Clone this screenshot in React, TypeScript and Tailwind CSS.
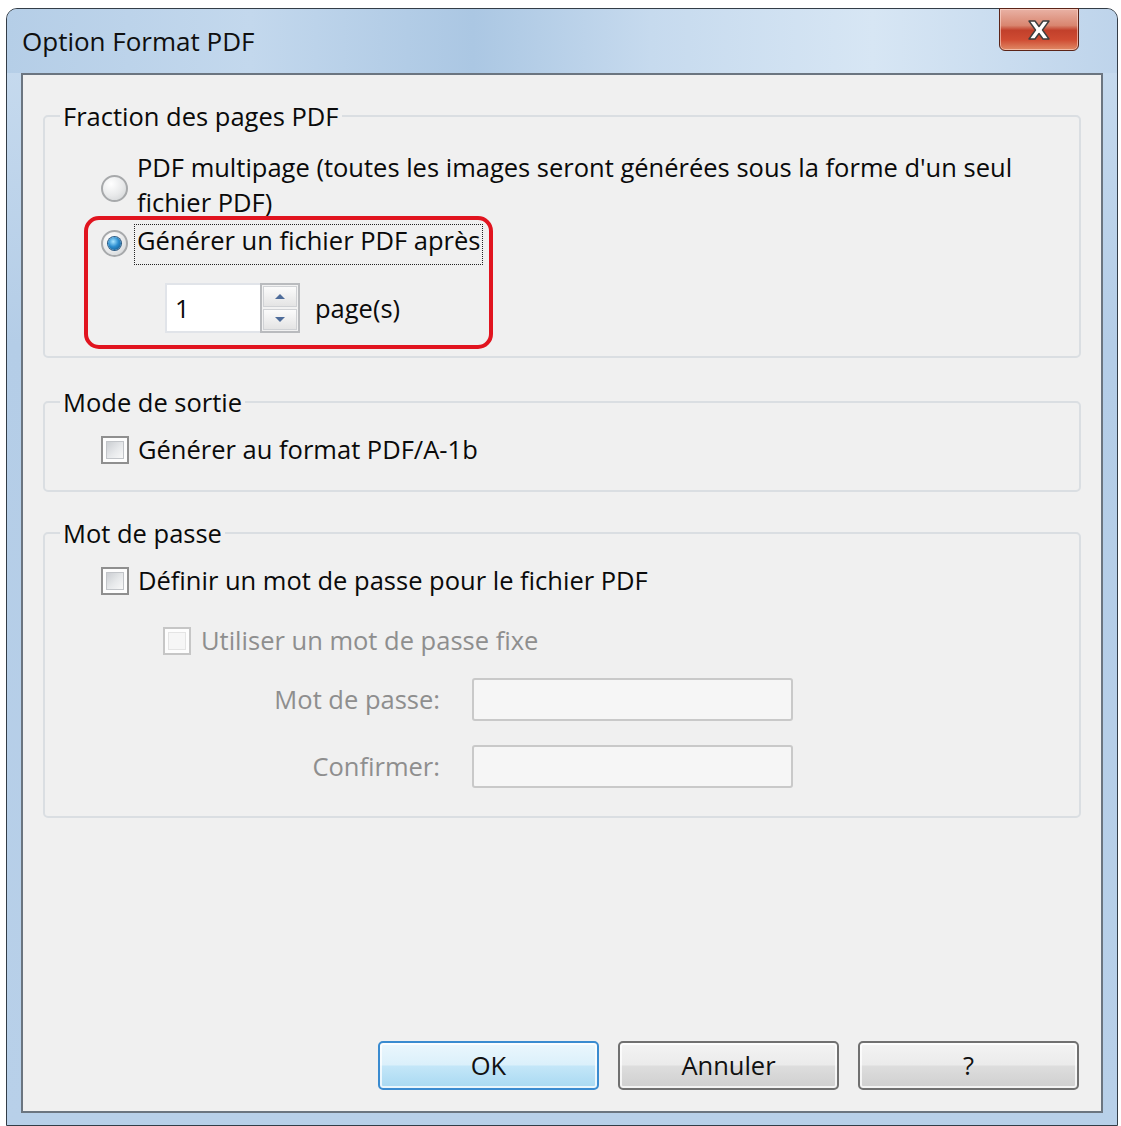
import React from "react";

const Checkbox = ({ disabled }: { disabled?: boolean }) => (
  <span
    className={`flex h-[28px] w-[28px] shrink-0 items-center justify-center border-2 bg-[#fdfdfd] ${
      disabled ? "border-[#c6c6c6]" : "border-[#8f8f8f]"
    }`}
  >
    <span
      className={`h-[18px] w-[18px] border ${
        disabled
          ? "border-[#e4e4e4] bg-[#f6f6f6]"
          : "border-[#c2c5c9] bg-[linear-gradient(135deg,#cbced2,#e7e9eb_55%,#f8f8f8)]"
      }`}
    />
  </span>
);

const Radio = ({ checked }: { checked?: boolean }) => (
  <span className="flex h-[27px] w-[27px] shrink-0 items-center justify-center rounded-full border-2 border-[#a7a9ab] bg-[radial-gradient(circle_at_35%_30%,#ffffff,#e8e9ea_55%,#cdd0d2)]">
    {checked && (
      <span className="h-[13px] w-[13px] rounded-full bg-[radial-gradient(circle_at_40%_35%,#a6e4ff,#2b8ed0_45%,#0c4b7c)] shadow-[0_0_0_1px_#2b5b84]" />
    )}
  </span>
);

const SpinArrow = ({ up }: { up?: boolean }) => (
  <svg width="12" height="7" viewBox="0 0 12 7">
    <path d={up ? "M1 6 L6 1 L11 6 Z" : "M1 1 L6 6 L11 1 Z"} fill="#4e6c9a" />
  </svg>
);

const WinButton = ({ label, isDefault }: { label: string; isDefault?: boolean }) => (
  <button
    className={`h-[49px] w-[221px] rounded-[5px] border-2 text-[25.5px] text-[#111] shadow-[inset_0_0_0_2px_rgba(255,255,255,0.75)] ${
      isDefault
        ? "border-[#3a8bd0] bg-[linear-gradient(#ebf7fd,#dbf0fb_48%,#c3e6f8_52%,#a8d9f2)]"
        : "border-[#707070] bg-[linear-gradient(#f3f3f3,#ebebeb_48%,#dddddd_52%,#cfcfcf)]"
    }`}
  >
    {label}
  </button>
);

export default function App() {
  return (
    <div className="h-[1126px] w-[1121px] overflow-hidden bg-white pl-[6px] pt-[8px] font-['Open_Sans',sans-serif] text-[25.5px] text-[#0a0a0a]">
      <div className="flex h-[1118px] w-[1112px] flex-col rounded-t-[11px] border border-[#333d47] bg-[linear-gradient(#c9dcef,#b4cde7_30%,#b8d0e9)]">
        {/* title bar */}
        <div className="flex h-[64px] shrink-0 items-center rounded-t-[10px] bg-[linear-gradient(90deg,#b5cee7,#c3d8ed_22%,#abc7e3_42%,#c6daee_58%,#d7e6f4_78%,#bed4eb)] pl-[15px] pr-[38px]">
          <span className="flex-1 text-[26px] leading-[30px] text-[#0f0f0f]">Option Format PDF</span>
          <div className="-mt-[1px] flex h-[43px] w-[80px] items-center justify-center self-start rounded-b-[6px] border border-[#5b2418] bg-[linear-gradient(#e9b2a5,#d98670_40%,#c2402b_52%,#cf4b32_75%,#e08a66)] shadow-[inset_0_0_0_1px_rgba(255,220,210,0.6)]">
            <svg width="26" height="20" viewBox="0 0 26 20">
              <path
                d="M3 1 H9 L13 6.5 L17 1 H23 L16.5 10 L23 19 H17 L13 13.5 L9 19 H3 L9.5 10 Z"
                fill="#ffffff"
                stroke="#3d3d3d"
                strokeWidth="1.4"
                strokeLinejoin="round"
              />
            </svg>
          </div>
        </div>

        {/* client area */}
        <div className="mx-[14px] mb-[12px] flex flex-1 flex-col border-2 border-[#6b7580] bg-[#f0f0f0] px-[20px] pt-[25px] pb-[21px]">
          {/* Fraction des pages PDF */}
          <fieldset className="relative rounded-[5px] border-2 border-[#dadee2] pb-[23px]">
            <legend className="ml-[15px] px-[3px] leading-[32px]">Fraction des pages PDF</legend>
            <div className="mt-[18px] flex items-center pl-[56px]">
              <span className="mt-[6px]">
                <Radio />
              </span>
              <span className="ml-[9px] leading-[35px]">
                PDF multipage (toutes les images seront générées sous la forme d'un seul
                <br />
                fichier PDF)
              </span>
            </div>
            <div className="mt-[4px] flex items-center pl-[56px]">
              <span className="-mt-[3px]">
                <Radio checked />
              </span>
              <span className="ml-[6px] border border-dotted border-[#222] px-[2px] pt-[3px] pb-[12px] leading-[24px]">
                Générer un fichier PDF après
              </span>
            </div>
            <div className="mt-[18px] flex items-center pl-[120px]">
              <div className="flex h-[50px] w-[135px]">
                <div className="flex flex-1 items-center border-2 border-r-0 border-[#e1e4e9] bg-white pl-[8px]">1</div>
                <div className="flex w-[40px] flex-col gap-[2px] border-2 border-[#b9bbbe] bg-[#f2f2f2] p-[1px]">
                  <div className="flex flex-1 items-center justify-center border border-[#d0d2d5] bg-[linear-gradient(#fbfbfb,#e4e4e4)]">
                    <SpinArrow up />
                  </div>
                  <div className="flex flex-1 items-center justify-center border border-[#d0d2d5] bg-[linear-gradient(#fbfbfb,#e4e4e4)]">
                    <SpinArrow />
                  </div>
                </div>
              </div>
              <span className="ml-[15px] leading-[35px]">page(s)</span>
            </div>
            {/* annotation */}
            <div className="pointer-events-none absolute left-[39px] top-[84px] h-[133px] w-[409px] rounded-[15px] border-4 border-[#e1141f]" />
          </fieldset>

          {/* Mode de sortie */}
          <fieldset className="mt-[28px] rounded-[5px] border-2 border-[#dadee2] pb-[23px]">
            <legend className="ml-[15px] px-[3px] leading-[32px]">Mode de sortie</legend>
            <div className="mt-[14px] flex items-center pl-[56px]">
              <Checkbox />
              <span className="ml-[9px] leading-[35px]">Générer au format PDF/A-1b</span>
            </div>
          </fieldset>

          {/* Mot de passe */}
          <fieldset className="mt-[25px] rounded-[5px] border-2 border-[#dadee2] pb-[28px]">
            <legend className="ml-[15px] px-[3px] leading-[32px]">Mot de passe</legend>
            <div className="mt-[14px] flex items-center pl-[56px]">
              <Checkbox />
              <span className="ml-[9px] leading-[35px]">Définir un mot de passe pour le fichier PDF</span>
            </div>
            <div className="mt-[25px] flex items-center pl-[118px] text-[#8e8e8e]">
              <Checkbox disabled />
              <span className="ml-[10px] leading-[35px]">Utiliser un mot de passe fixe</span>
            </div>
            <div className="mt-[20px] flex items-center text-[#8e8e8e]">
              <span className="w-[395px] text-right leading-[35px]">Mot de passe:</span>
              <div className="ml-[32px] h-[43px] w-[321px] rounded-[3px] border-2 border-[#c9c9c9] bg-[#f6f6f6]" />
            </div>
            <div className="mt-[24px] flex items-center text-[#8e8e8e]">
              <span className="w-[395px] text-right leading-[35px]">Confirmer:</span>
              <div className="ml-[32px] h-[43px] w-[321px] rounded-[3px] border-2 border-[#c9c9c9] bg-[#f6f6f6]" />
            </div>
          </fieldset>

          <div className="mt-auto flex justify-end gap-[19px] pr-[2px]">
            <WinButton label="OK" isDefault />
            <WinButton label="Annuler" />
            <WinButton label="?" />
          </div>
        </div>
      </div>
    </div>
  );
}
